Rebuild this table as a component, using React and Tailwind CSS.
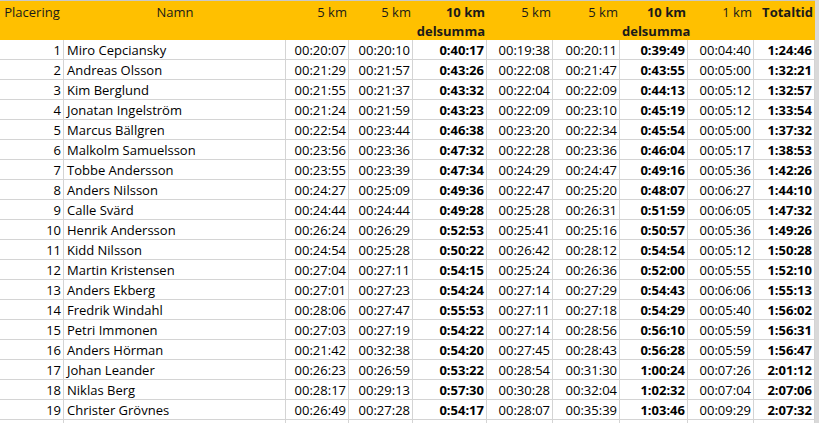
import React from 'react';

// Excel-style results sheet
const COLS = ['w-[64px]', 'w-[222px]', 'w-[63px]', 'w-[64px]', 'w-[74px]', 'w-[66px]', 'w-[67px]', 'w-[68px]', 'w-[66px]', 'w-[61px]'];
const BOLD = [4, 7, 9];

const rows = [
  ['1', 'Miro Cepciansky', '00:20:07', '00:20:10', '0:40:17', '00:19:38', '00:20:11', '0:39:49', '00:04:40', '1:24:46'],
  ['2', 'Andreas Olsson', '00:21:29', '00:21:57', '0:43:26', '00:22:08', '00:21:47', '0:43:55', '00:05:00', '1:32:21'],
  ['3', 'Kim Berglund', '00:21:55', '00:21:37', '0:43:32', '00:22:04', '00:22:09', '0:44:13', '00:05:12', '1:32:57'],
  ['4', 'Jonatan Ingelström', '00:21:24', '00:21:59', '0:43:23', '00:22:09', '00:23:10', '0:45:19', '00:05:12', '1:33:54'],
  ['5', 'Marcus Bällgren', '00:22:54', '00:23:44', '0:46:38', '00:23:20', '00:22:34', '0:45:54', '00:05:00', '1:37:32'],
  ['6', 'Malkolm Samuelsson', '00:23:56', '00:23:36', '0:47:32', '00:22:28', '00:23:36', '0:46:04', '00:05:17', '1:38:53'],
  ['7', 'Tobbe Andersson', '00:23:55', '00:23:39', '0:47:34', '00:24:29', '00:24:47', '0:49:16', '00:05:36', '1:42:26'],
  ['8', 'Anders Nilsson', '00:24:27', '00:25:09', '0:49:36', '00:22:47', '00:25:20', '0:48:07', '00:06:27', '1:44:10'],
  ['9', 'Calle Svärd', '00:24:44', '00:24:44', '0:49:28', '00:25:28', '00:26:31', '0:51:59', '00:06:05', '1:47:32'],
  ['10', 'Henrik Andersson', '00:26:24', '00:26:29', '0:52:53', '00:25:41', '00:25:16', '0:50:57', '00:05:36', '1:49:26'],
  ['11', 'Kidd Nilsson', '00:24:54', '00:25:28', '0:50:22', '00:26:42', '00:28:12', '0:54:54', '00:05:12', '1:50:28'],
  ['12', 'Martin Kristensen', '00:27:04', '00:27:11', '0:54:15', '00:25:24', '00:26:36', '0:52:00', '00:05:55', '1:52:10'],
  ['13', 'Anders Ekberg', '00:27:01', '00:27:23', '0:54:24', '00:27:14', '00:27:29', '0:54:43', '00:06:06', '1:55:13'],
  ['14', 'Fredrik Windahl', '00:28:06', '00:27:47', '0:55:53', '00:27:11', '00:27:18', '0:54:29', '00:05:40', '1:56:02'],
  ['15', 'Petri Immonen', '00:27:03', '00:27:19', '0:54:22', '00:27:14', '00:28:56', '0:56:10', '00:05:59', '1:56:31'],
  ['16', 'Anders Hörman', '00:21:42', '00:32:38', '0:54:20', '00:27:45', '00:28:43', '0:56:28', '00:05:59', '1:56:47'],
  ['17', 'Johan Leander', '00:26:23', '00:26:59', '0:53:22', '00:28:54', '00:31:30', '1:00:24', '00:07:26', '2:01:12'],
  ['18', 'Niklas Berg', '00:28:17', '00:29:13', '0:57:30', '00:30:28', '00:32:04', '1:02:32', '00:07:04', '2:07:06'],
  ['19', 'Christer Grövnes', '00:26:49', '00:27:28', '0:54:17', '00:28:07', '00:35:39', '1:03:46', '00:09:29', '2:07:32'],
];

const headers = [
  { lines: ['Placering'], align: 'text-center' },
  { lines: ['Namn'], align: 'text-center' },
  { lines: ['5 km'], align: 'text-right' },
  { lines: ['5 km'], align: 'text-right' },
  { lines: ['10 km', 'delsumma'], align: 'text-right', bold: true },
  { lines: ['5 km'], align: 'text-right' },
  { lines: ['5 km'], align: 'text-right' },
  { lines: ['10 km', 'delsumma'], align: 'text-right', bold: true },
  { lines: ['1 km'], align: 'text-right' },
  { lines: ['Totaltid'], align: 'text-right', bold: true },
];

export default function App() {
  return (
    <div
      className="w-[819px] h-[423px] overflow-hidden bg-white text-[13px] text-black flex"
      style={{ fontFamily: '"Open Sans", "Liberation Sans", sans-serif' }}
    >
      <div className="flex flex-col w-[815px] shrink-0">
        {/* header */}
        <div className="flex h-[40px] bg-[#ffc000] border-t border-[#c8c8c8]">
          {headers.map((h, i) => (
            <div
              key={i}
              className={`${COLS[i]} shrink-0 pt-[2px] leading-[19px] px-[2px] ${h.align} ${h.bold ? 'font-bold' : ''} text-[#1a1a1a]`}
            >
              {h.lines.map((l) => (
                <div key={l}>{l}</div>
              ))}
            </div>
          ))}
        </div>

        {/* data rows */}
        {rows.map((r) => (
          <div key={r[0]} className="flex h-[20px]">
            {r.map((v, i) => (
              <div
                key={i}
                className={`${COLS[i]} shrink-0 border-r border-b border-[#d4d4d4] pt-[2px] leading-[17px] whitespace-nowrap ${
                  i === 1 ? 'text-left pl-[3px]' : 'text-right pr-[2px]'
                } ${BOLD.includes(i) ? 'font-bold' : ''}`}
              >
                {v}
              </div>
            ))}
          </div>
        ))}
        <div className="flex h-[20px]">
          {COLS.map((c, i) => (
            <div key={i} className={`${c} shrink-0 border-r border-[#d4d4d4]`} />
          ))}
        </div>
      </div>
      <div className="flex-1 bg-[#d9d9d9]" />
    </div>
  );
}
